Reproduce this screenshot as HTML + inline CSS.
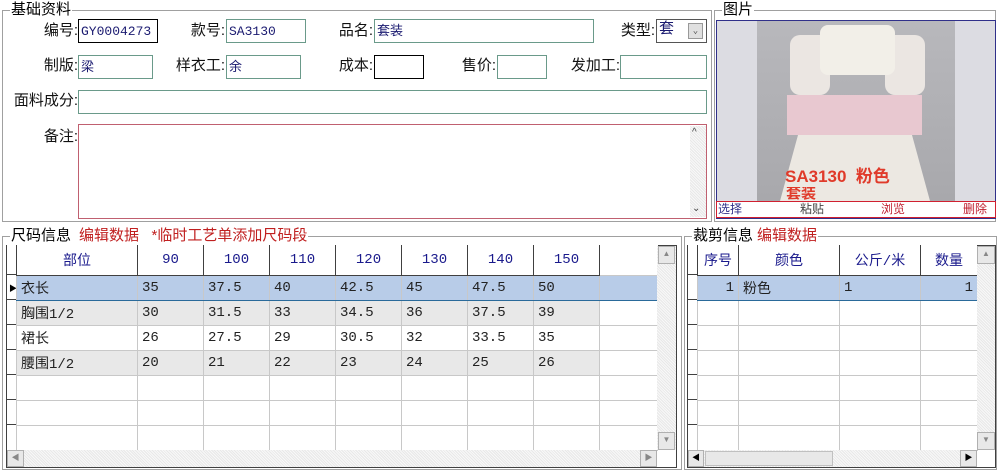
<!DOCTYPE html>
<html><head><meta charset="utf-8"><style>
*{margin:0;padding:0;box-sizing:border-box}
body{width:997px;height:470px;background:#fff;position:relative;overflow:hidden;font-family:"Liberation Sans","Noto Sans CJK SC",sans-serif;font-size:14px;color:#000}
.a{position:absolute}
.fs{position:absolute;border:1px solid #a0a0a0}
.lg{position:absolute;background:#fff;font-size:15px;line-height:16px;padding:0 1px}
.lb{position:absolute;font-size:15px;line-height:18px;text-align:right;color:#111}
.in{position:absolute;border:1px solid #6a9a8a;height:24px;font-size:13px;color:#1a1a70;padding:3px 2px;line-height:17px;background:#fff;font-family:"Liberation Mono","Noto Sans CJK SC",monospace}
table{border-collapse:collapse;position:absolute;table-layout:fixed}
td{border:1px solid #c8c8c8;height:25px;font-size:14px;padding:0 4px;white-space:nowrap;overflow:hidden;font-family:"Liberation Mono","Noto Sans CJK SC",monospace;color:#222}
th{border:1px solid #404040;border-top:none;height:30px;font-size:14px;font-weight:normal;color:#1a1a8c;background:#fff;font-family:"Liberation Mono","Noto Sans CJK SC",monospace}
.sel td{background:#b8cce8;border-top:1px solid #2a6a9a;border-bottom:1px solid #2a6a9a}
.gr td{background:#e8e8e8}
.rh{position:absolute;background:#fff;border-left:1px solid #404040;border-right:1px solid #404040}
.rh div{border-bottom:1px solid #404040;height:25px}
.sb{position:absolute;background:#f0f0f0;background-image:repeating-linear-gradient(45deg,#e8e8e8 0 1px,#f8f8f8 1px 2px)}
.btn{position:absolute;background:#e8e8e8;border:1px solid #b0b0b0;font-size:8px;color:#888;text-align:center;line-height:14px}
</style></head><body>

<div class="fs" style="left:2px;top:10px;width:710px;height:212px"></div>
<div class="lg" style="left:10px;top:2px">基础资料</div>
<div class="lb" style="left:10px;top:22px;width:68px">编号:</div>
<div class="in" style="left:78px;top:19px;width:80px;border-color:#000">GY0004273</div>
<div class="lb" style="left:155px;top:22px;width:70px">款号:</div>
<div class="in" style="left:226px;top:19px;width:80px">SA3130</div>
<div class="lb" style="left:305px;top:22px;width:68px">品名:</div>
<div class="in" style="left:374px;top:19px;width:220px">套装</div>
<div class="lb" style="left:585px;top:22px;width:70px">类型:</div>
<div class="in" style="left:656px;top:19px;width:51px;border-color:#555;font-size:15px;padding-top:1px">套<span class="a" style="left:31px;top:3px;width:15px;height:16px;background:#e0e0e0;border:1px solid #999;font-size:9px;color:#555;text-align:center;line-height:14px">⌄</span></div>

<div class="lb" style="left:10px;top:57px;width:68px">制版:</div>
<div class="in" style="left:78px;top:55px;width:75px">梁</div>
<div class="lb" style="left:150px;top:57px;width:75px">样衣工:</div>
<div class="in" style="left:226px;top:55px;width:75px">余</div>
<div class="lb" style="left:305px;top:57px;width:68px">成本:</div>
<div class="in" style="left:374px;top:55px;width:50px;border-color:#000"></div>
<div class="lb" style="left:430px;top:57px;width:66px">售价:</div>
<div class="in" style="left:497px;top:55px;width:50px"></div>
<div class="lb" style="left:545px;top:57px;width:75px">发加工:</div>
<div class="in" style="left:620px;top:55px;width:87px"></div>

<div class="lb" style="left:0px;top:92px;width:78px">面料成分:</div>
<div class="in" style="left:78px;top:90px;width:629px"></div>
<div class="lb" style="left:10px;top:128px;width:68px">备注:</div>
<div class="in" style="left:78px;top:124px;width:629px;height:95px;border-color:#c06070"></div>
<div class="sb" style="left:690px;top:126px;width:16px;height:91px"></div>
<div class="a" style="left:692px;top:127px;font-size:10px;color:#444">^</div>
<div class="a" style="left:692px;top:203px;font-size:10px;color:#444">⌄</div>

<div class="fs" style="left:714px;top:10px;width:282px;height:212px"></div>
<div class="lg" style="left:722px;top:2px">图片</div>
<div class="a" style="left:716px;top:20px;width:280px;height:199px;border:1px solid #30308a;background:#dcdce2"></div>
<div class="a" style="left:757px;top:21px;width:198px;height:180px;background:linear-gradient(180deg,#b8b8bc 0%,#a8a8ac 100%)"></div>
<div class="a" style="left:790px;top:35px;width:40px;height:60px;background:#ebe6e2;border-radius:10px"></div>
<div class="a" style="left:885px;top:35px;width:40px;height:60px;background:#ebe6e2;border-radius:10px"></div>
<div class="a" style="left:820px;top:25px;width:75px;height:50px;background:#f2efe8;border-radius:8px"></div>
<div class="a" style="left:787px;top:95px;width:135px;height:40px;background:#e8c8d0"></div>
<div class="a" style="left:780px;top:135px;width:150px;height:66px;background:#ece8e2;clip-path:polygon(12% 0,88% 0,100% 100%,0 100%)"></div>
<div class="a" style="left:785px;top:167px;font-size:17px;font-weight:bold;color:#e03a2a;line-height:20px">SA3130 &nbsp;粉色</div>
<div class="a" style="left:786px;top:187px;font-size:15px;font-weight:bold;color:#e03a2a;line-height:14px;height:14px;overflow:hidden">套装</div>
<div class="a" style="left:716px;top:201px;width:280px;height:17px;border:1px solid #d02030;background:#fff;font-size:12px;line-height:15px">
<span class="a" style="left:1px;color:#30308a">选择</span><span class="a" style="left:83px;color:#444">粘贴</span><span class="a" style="left:164px;color:#c02030">浏览</span><span class="a" style="left:246px;color:#c02030">删除</span></div>

<div class="fs" style="left:2px;top:236px;width:680px;height:234px"></div>
<div class="lg" style="left:10px;top:228px">尺码信息<span style="color:#c02020;margin-left:8px">编辑数据 &nbsp;&nbsp;*临时工艺单添加尺码段</span></div>
<div class="a" style="left:6px;top:245px;width:671px;height:223px;border:1px solid #404040;background:#fff"></div>
<div class="rh" style="left:6px;top:245px;width:11px;height:205px">
<div style="height:30px"></div><div></div><div></div><div></div><div></div><div></div><div></div><div style="border:none"></div></div>
<div class="a" style="left:9px;top:283px;font-size:8px">▶</div>
<table style="left:16px;top:245px;width:641px">
<colgroup><col style="width:121px"><col style="width:66px"><col style="width:66px"><col style="width:66px"><col style="width:66px"><col style="width:66px"><col style="width:66px"><col style="width:66px"><col style="width:58px"></colgroup>
<tr><th>部位</th><th>90</th><th>100</th><th>110</th><th>120</th><th>130</th><th>140</th><th>150</th><th style="border:none;border-bottom:1px solid #c8c8c8;background:#fff"></th></tr>
<tr class="sel"><td>衣长</td><td>35</td><td>37.5</td><td>40</td><td>42.5</td><td>45</td><td>47.5</td><td>50</td><td></td></tr>
<tr class="gr"><td>胸围1/2</td><td>30</td><td>31.5</td><td>33</td><td>34.5</td><td>36</td><td>37.5</td><td>39</td><td style="background:#fff"></td></tr>
<tr><td>裙长</td><td>26</td><td>27.5</td><td>29</td><td>30.5</td><td>32</td><td>33.5</td><td>35</td><td></td></tr>
<tr class="gr"><td>腰围1/2</td><td>20</td><td>21</td><td>22</td><td>23</td><td>24</td><td>25</td><td>26</td><td style="background:#fff"></td></tr>
<tr><td></td><td></td><td></td><td></td><td></td><td></td><td></td><td></td><td></td></tr>
<tr><td></td><td></td><td></td><td></td><td></td><td></td><td></td><td></td><td></td></tr>
<tr><td></td><td></td><td></td><td></td><td></td><td></td><td></td><td></td><td></td></tr>
</table>
<div class="sb" style="left:657px;top:246px;width:19px;height:204px"></div>
<div class="btn" style="left:658px;top:246px;width:17px;height:18px">▲</div>
<div class="btn" style="left:658px;top:432px;width:17px;height:18px">▼</div>
<div class="sb" style="left:7px;top:450px;width:650px;height:17px"></div>
<div class="btn" style="left:7px;top:450px;width:17px;height:17px">◀</div>
<div class="btn" style="left:640px;top:450px;width:17px;height:17px">▶</div>

<div class="fs" style="left:684px;top:236px;width:313px;height:234px"></div>
<div class="lg" style="left:692px;top:228px">裁剪信息<span style="color:#c02020;margin-left:4px">编辑数据</span></div>
<div class="a" style="left:687px;top:245px;width:309px;height:223px;border:1px solid #404040;background:#fff"></div>
<div class="rh" style="left:687px;top:245px;width:11px;height:205px">
<div style="height:30px"></div><div></div><div></div><div></div><div></div><div></div><div></div><div style="border:none"></div></div>
<table style="left:697px;top:245px;width:280px">
<colgroup><col style="width:41px"><col style="width:101px"><col style="width:81px"><col style="width:57px"></colgroup>
<tr><th>序号</th><th>颜色</th><th>公斤/米</th><th>数量</th></tr>
<tr class="sel"><td style="text-align:right">1</td><td>粉色</td><td>1</td><td style="text-align:right">1</td></tr>
<tr><td></td><td></td><td></td><td></td></tr>
<tr><td></td><td></td><td></td><td></td></tr>
<tr><td></td><td></td><td></td><td></td></tr>
<tr><td></td><td></td><td></td><td></td></tr>
<tr><td></td><td></td><td></td><td></td></tr>
<tr><td></td><td></td><td></td><td></td></tr>
</table>
<div class="sb" style="left:977px;top:246px;width:18px;height:204px"></div>
<div class="btn" style="left:977px;top:246px;width:18px;height:18px">▲</div>
<div class="btn" style="left:977px;top:432px;width:18px;height:18px">▼</div>
<div class="sb" style="left:688px;top:450px;width:289px;height:17px"></div>
<div class="a" style="left:705px;top:451px;width:128px;height:15px;background:#e8e8e8;border:1px solid #c0c0c0"></div>
<div class="btn" style="left:688px;top:450px;width:16px;height:17px;color:#000">◀</div>
<div class="btn" style="left:960px;top:450px;width:17px;height:17px;color:#000">▶</div>
</body></html>
